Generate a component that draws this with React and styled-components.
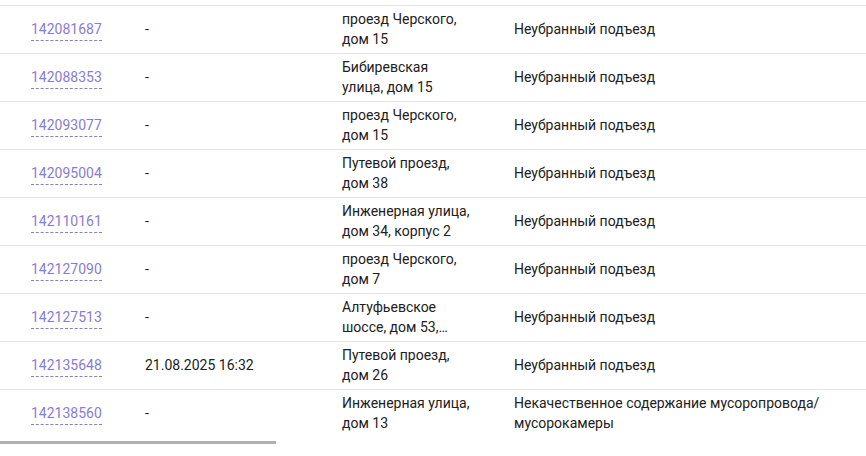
import React from "react";
import styled, { createGlobalStyle } from "styled-components";

const Global = createGlobalStyle`
  html, body { margin: 0; padding: 0; background: #fff; }
  body { font-family: Roboto, "Noto Sans", Arial, sans-serif; overflow: hidden; }
`;

const Page = styled.div`
  width: 866px;
  height: 456px;
  padding-top: 5px;
  box-sizing: border-box;
`;

const Table = styled.div`
  display: flex;
  flex-direction: column;
`;

const Row = styled.div`
  display: grid;
  grid-template-columns: 145px 197px 172px 1fr;
  align-items: center;
  height: 48px;
  padding-bottom: 2px;
  box-sizing: border-box;
  border-top: 1px solid #e0e0e0;
  font-size: 14px;
  line-height: 20px;
  color: #212121;
`;

const IdCell = styled.div`
  padding-left: 31px;
`;

const IdLink = styled.a`
  color: #8a7bd6;
  text-decoration: none;
  border-bottom: 1px dashed #8a7bd6;
  padding-bottom: 3px;
  cursor: pointer;
`;

const Cell = styled.div`
  min-width: 0;
`;

const Address = styled.div`
  width: 128px;
  display: -webkit-box;
  -webkit-line-clamp: 2;
  -webkit-box-orient: vertical;
  overflow: hidden;
`;

const Description = styled.div`
  max-width: 310px;
`;

const Scrollbar = styled.div`
  width: 276px;
  height: 3px;
  margin-top: 4px;
  background: #b0b0b0;
`;

const rows = [
  { id: "142081687", date: "-", addr: "проезд Черского, дом 15", desc: "Неубранный подъезд" },
  { id: "142088353", date: "-", addr: "Бибиревская улица, дом 15", desc: "Неубранный подъезд" },
  { id: "142093077", date: "-", addr: "проезд Черского, дом 15", desc: "Неубранный подъезд" },
  { id: "142095004", date: "-", addr: "Путевой проезд, дом 38", desc: "Неубранный подъезд" },
  { id: "142110161", date: "-", addr: "Инженерная улица, дом 34, корпус 2", desc: "Неубранный подъезд" },
  { id: "142127090", date: "-", addr: "проезд Черского, дом 7", desc: "Неубранный подъезд" },
  { id: "142127513", date: "-", addr: "Алтуфьевское шоссе, дом 53, корпус 1", desc: "Неубранный подъезд" },
  { id: "142135648", date: "21.08.2025 16:32", addr: "Путевой проезд, дом 26", desc: "Неубранный подъезд" },
  { id: "142138560", date: "-", addr: "Инженерная улица, дом 13", desc: "Некачественное содержание мусоропровода/ мусорокамеры" },
];

export default function App() {
  return (
    <Page>
      <Global />
      <Table>
        {rows.map((r) => (
          <Row key={r.id}>
            <IdCell>
              <IdLink>{r.id}</IdLink>
            </IdCell>
            <Cell>{r.date}</Cell>
            <Cell>
              <Address>{r.addr}</Address>
            </Cell>
            <Cell>
              <Description>{r.desc}</Description>
            </Cell>
          </Row>
        ))}
      </Table>
      <Scrollbar />
    </Page>
  );
}
